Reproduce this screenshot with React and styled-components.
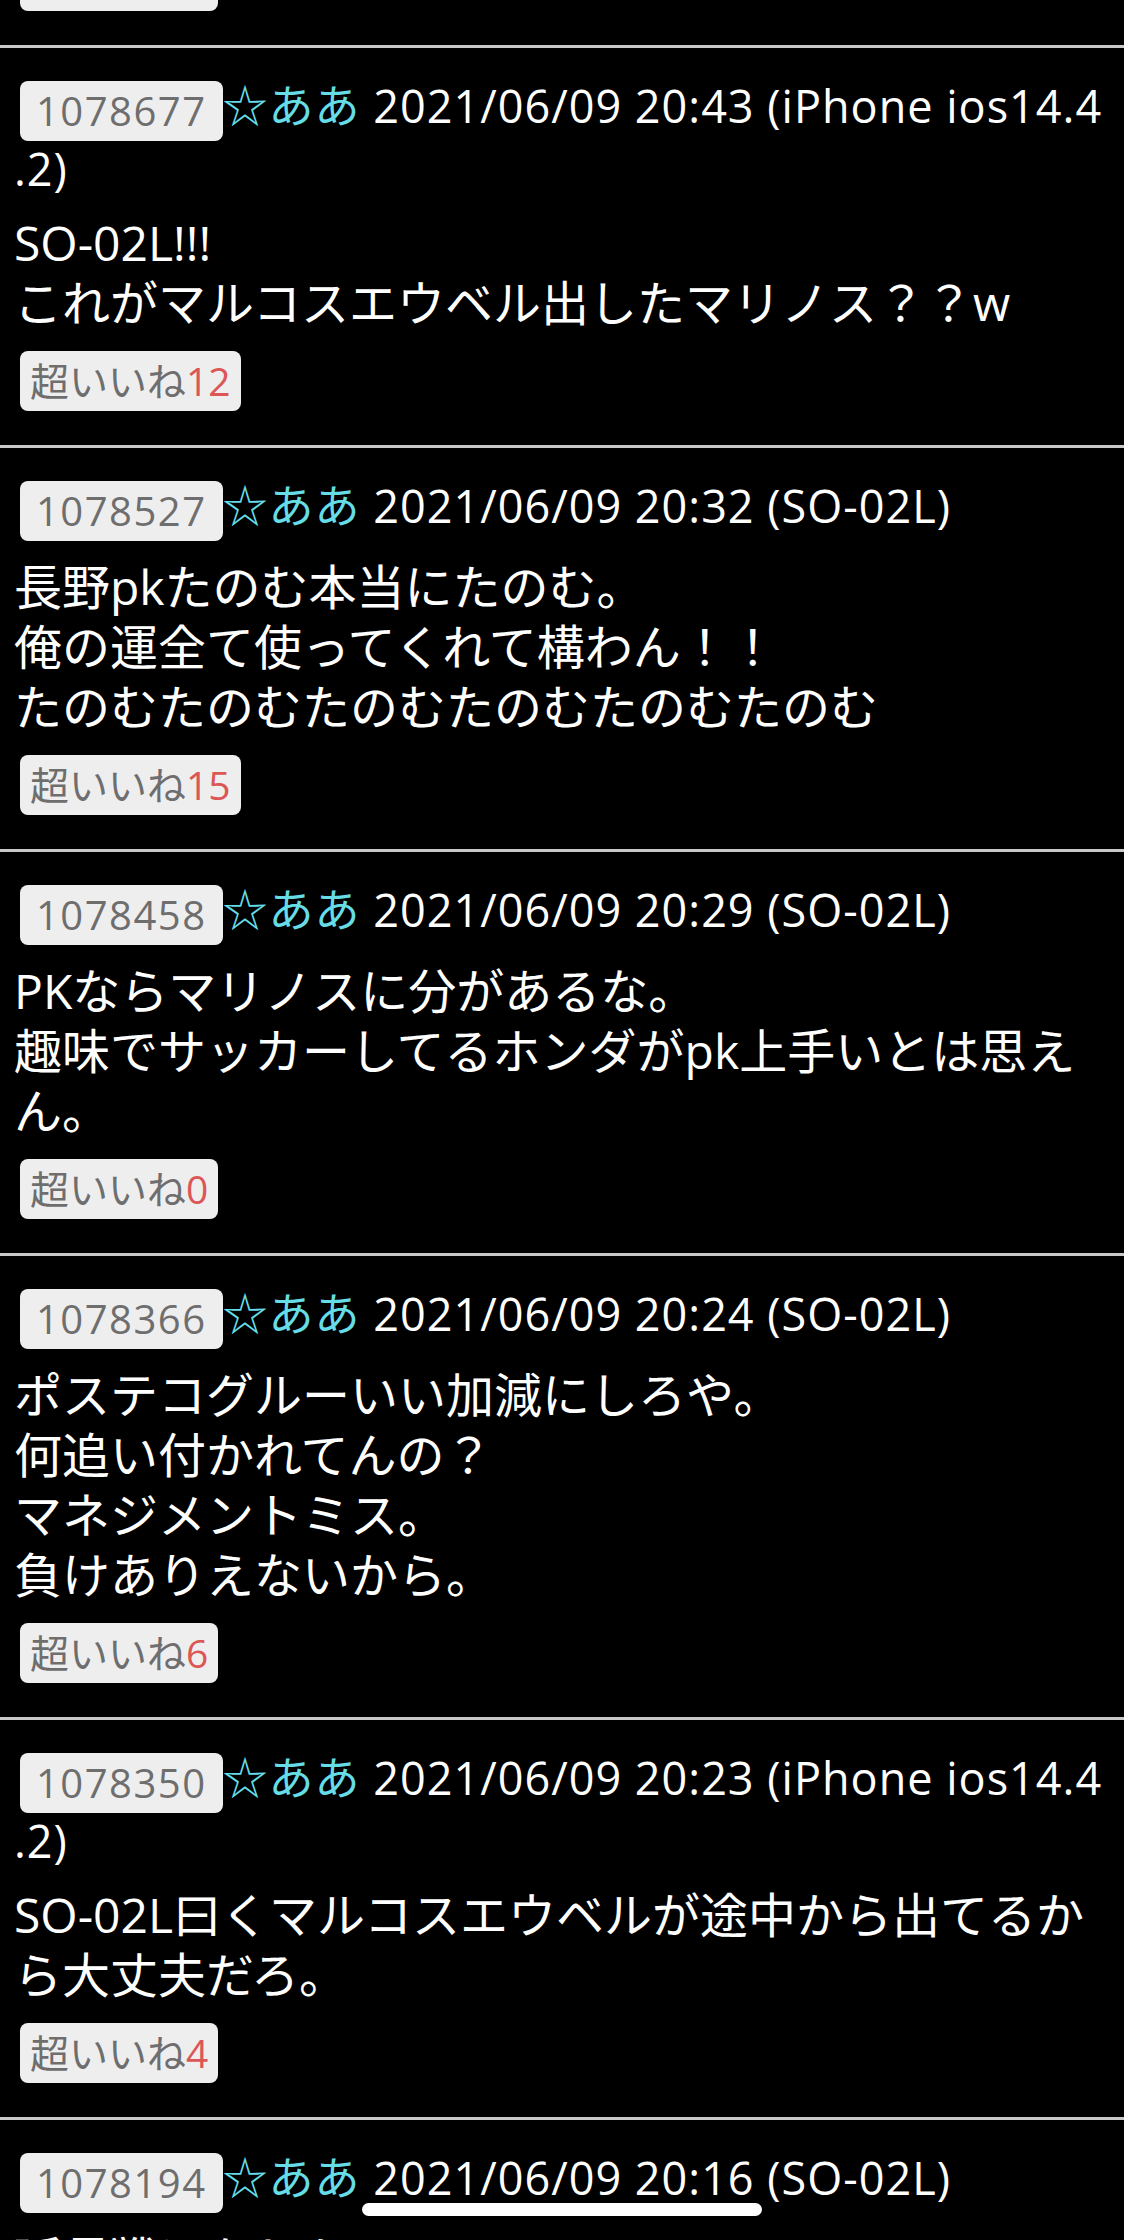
import styled, { createGlobalStyle } from 'styled-components';

const GlobalStyle = createGlobalStyle`
  html, body {
    margin: 0;
    padding: 0;
    background: #000;
  }

  body {
    font-family: "Open Sans", "Noto Sans CJK JP", sans-serif;
    color: #fff;
    -webkit-font-smoothing: antialiased;
  }
`;

const Thread = styled.div`
  margin-top: -49px;
`;

const Post = styled.article`
  padding: ${({ $tail }) => ($tail ? '0' : '30px')} 20px 34px 14px;
  border-bottom: 3px solid #c8c8c8;
`;

const Header = styled.div`
  font-size: 45px;
  line-height: 56px;
  letter-spacing: 1px;
  word-break: break-all;
  line-break: anywhere;
`;

const ResNumber = styled.span`
  display: inline-block;
  vertical-align: middle;
  height: 60px;
  line-height: 60px;
  margin-left: 6px;
  padding: 0 16px;
  border-radius: 8px;
  background: #eee;
  color: #6e6e6e;
  font-size: 40px;
  letter-spacing: 1.5px;
`;

const Name = styled.span`
  color: #66dde6;
`;

const Body = styled.div`
  margin-top: 16px;
  font-size: 48px;
  line-height: 60px;
`;

const LikeButton = styled.button`
  display: inline-flex;
  align-items: center;
  height: 60px;
  margin: ${({ $first }) => ($first ? '0' : '18px')} 0 0 6px;
  padding: 0 10px;
  border: none;
  border-radius: 8px;
  background: #eee;
  color: #6e6e6e;
  font-family: inherit;
  font-size: 39px;
  line-height: 60px;
`;

const Count = styled.span`
  color: #dc5656;
`;

const HomeIndicator = styled.div`
  position: fixed;
  left: 50%;
  bottom: 24px;
  width: 400px;
  height: 13px;
  margin-left: -200px;
  border-radius: 7px;
  background: #fff;
`;

const posts = [
  {
    id: '1078677',
    date: '2021/06/09 20:43',
    device: 'iPhone ios14.4.2',
    body: ['SO-02L!!!', 'これがマルコスエウベル出したマリノス？？w'],
    likes: 12
  },
  {
    id: '1078527',
    date: '2021/06/09 20:32',
    device: 'SO-02L',
    body: ['長野pkたのむ本当にたのむ。', '俺の運全て使ってくれて構わん！！', 'たのむたのむたのむたのむたのむたのむ'],
    likes: 15
  },
  {
    id: '1078458',
    date: '2021/06/09 20:29',
    device: 'SO-02L',
    body: ['PKならマリノスに分があるな。', '趣味でサッカーしてるホンダがpk上手いとは思えん。'],
    likes: 0
  },
  {
    id: '1078366',
    date: '2021/06/09 20:24',
    device: 'SO-02L',
    body: ['ポステコグルーいい加減にしろや。', '何追い付かれてんの？', 'マネジメントミス。', '負けありえないから。'],
    likes: 6
  },
  {
    id: '1078350',
    date: '2021/06/09 20:23',
    device: 'iPhone ios14.4.2',
    body: ['SO-02L曰くマルコスエウベルが途中から出てるから大丈夫だろ。'],
    likes: 4
  },
  {
    id: '1078194',
    date: '2021/06/09 20:16',
    device: 'SO-02L',
    body: ['延長戦はなしか'],
    likes: 3
  }
];

function Res({ post }) {
  return (
    <Post>
      <Header>
        <ResNumber>{post.id}</ResNumber>
        <Name>☆ああ</Name> {post.date} ({post.device})
      </Header>
      <Body>
        {post.body.map((line, i) => (
          <span key={i}>
            {i > 0 && <br />}
            {line}
          </span>
        ))}
      </Body>
      <LikeButton type="button">
        超いいね<Count>{post.likes}</Count>
      </LikeButton>
    </Post>
  );
}

export default function App() {
  return (
    <>
      <GlobalStyle />
      <Thread>
        <Post $tail>
          <LikeButton type="button" $first>
            超いいね<Count>2</Count>
          </LikeButton>
        </Post>
        {posts.map((post) => (
          <Res key={post.id} post={post} />
        ))}
      </Thread>
      <HomeIndicator />
    </>
  );
}
